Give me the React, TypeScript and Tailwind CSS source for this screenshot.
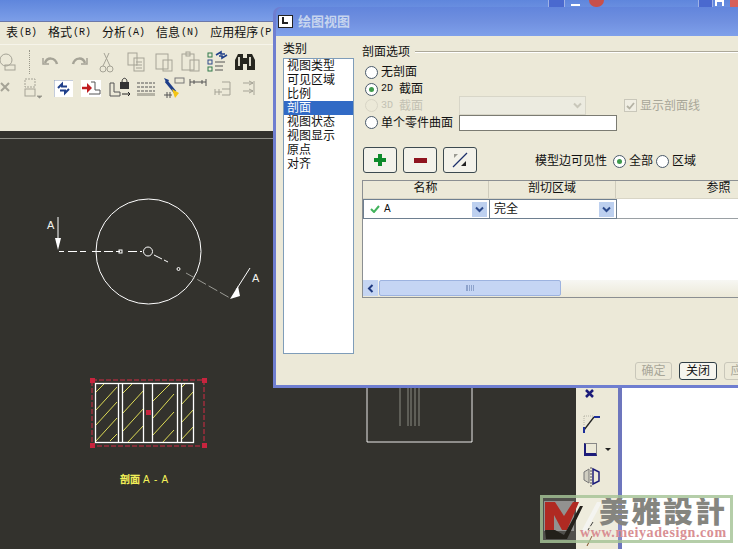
const cjk = "font-['Liberation_Sans','Noto_Sans_CJK_SC',sans-serif]";

function Radio({ on, off }: { on?: boolean; off?: boolean }) {
  return (
    <span className={`flex items-center justify-center w-[13px] h-[13px] rounded-full border shrink-0 ${off ? "border-[#d8d5c6] bg-[#ece9d8]" : "border-[#4a5a6a] bg-white"}`}>
      {on && <span className="w-[5px] h-[5px] rounded-full bg-[#3f9a4c]" />}
    </span>
  );
}

function Chevron({ dim }: { dim?: boolean }) {
  return (
    <svg width="9" height="7" viewBox="0 0 9 7" fill="none" stroke={dim ? "#c9c7ba" : "#2c4a8c"} strokeWidth="2">
      <path d="M1 1.5l3.5 3.5 3.5-3.5" />
    </svg>
  );
}

function ToolIcon({ children, w = 26 }: { children: React.ReactNode; w?: number }) {
  return (
    <svg width={w} height="24" viewBox={`0 0 ${w} 24`} fill="none" stroke="#a5a396" strokeWidth="1" className="shrink-0">
      {children}
    </svg>
  );
}

function TopToolbar() {
  return (
    <div className="flex items-center h-[30px] -ml-[6px] pt-[3px]">
      <ToolIcon><circle cx="12" cy="10" r="6" /><rect x="11" y="15" width="10" height="5" /></ToolIcon>
      <span className="w-px h-[24px] ml-[9px] mr-[8px] border-l border-dotted border-[#9a988a]" />
      <ToolIcon><path d="M7 13c2-6 10-6 12 1" strokeWidth="2.5" /><path d="M5 8v6h6" strokeWidth="1.500" /></ToolIcon>
      <span className="w-[2px]" />
      <ToolIcon><path d="M19 13c-2-6-10-6-12 1" strokeWidth="2.5" /><path d="M21 8v6h-6" strokeWidth="1.500" /></ToolIcon>
      <span className="w-[2px]" />
      <ToolIcon><circle cx="9" cy="19" r="3" /><circle cx="16" cy="19" r="3" /><path d="M9 16L15 3M16 16L10 3" /></ToolIcon>
      <span className="w-[3px]" />
      <ToolIcon><rect x="5" y="3" width="9" height="12" /><rect x="11" y="8" width="10" height="13" /><path d="M13 12h6M13 15h6M13 18h6" /></ToolIcon>
      <span className="w-[2px]" />
      <ToolIcon><rect x="5" y="4" width="12" height="15" /><rect x="12" y="10" width="9" height="11" /></ToolIcon>
      <ToolIcon><rect x="5" y="4" width="12" height="16" /><rect x="9" y="2" width="4" height="4" /><rect x="13" y="10" width="9" height="11" /></ToolIcon>
      <span className="w-[2px]" />
      <svg width="26" height="24" viewBox="0 0 26 24" fill="none" className="shrink-0">
        <rect x="3" y="3" width="4" height="4" stroke="#2f7a4a" />
        <rect x="3" y="10" width="4" height="4" stroke="#2f4a8a" />
        <rect x="3" y="17" width="4" height="4" stroke="#2f7a4a" />
        <path d="M10 12h10M10 16h8M10 20h8" stroke="#555" />
        <path d="M11 5l5-3v2h4M22 5l-5 3V6h-3" stroke="#1f3f8a" strokeWidth="1.600" />
      </svg>
      <span className="w-[2px]" />
      <svg width="24" height="24" viewBox="0 0 24 24" className="shrink-0">
        <path d="M5 4h5v16H2V10zM14 4h5l3 6v10h-8zM10 8h4v6h-4z" fill="#26261f" />
        <path d="M5 7h2v9H5M16 7h2v9h-2" fill="#d8d6c8" />
      </svg>
    </div>
  );
}

function BottomToolbar() {
  return (
    <div className="flex items-center h-[30px] -ml-[3px] -mt-[2px]">
      <ToolIcon w={20}><path d="M4 7l8 8M12 7l-8 8" strokeWidth="2" /></ToolIcon>
      <span className="w-[5px]" />
      <ToolIcon w={22}><rect x="3" y="3" width="10" height="8" strokeDasharray="2 1" /><rect x="3" y="13" width="10" height="7" /><path d="M15 20h5l-2.500 2z" fill="#777" /></ToolIcon>
      <span className="w-[10px]" />
      <svg width="19" height="17" viewBox="0 0 19 17" fill="none" className="shrink-0">
        <rect width="19" height="17" fill="#fff" />
        <path d="M0 0h19M0 0v17" stroke="#8a9ab8" />
        <path d="M4 8l4-4v2.500h5M15 9l-4 4v-2.500H6" stroke="#1f3f8a" strokeWidth="2" />
      </svg>
      <span className="w-[8px]" />
      <svg width="20" height="17" viewBox="0 0 20 17" fill="none" className="shrink-0">
        <rect width="20" height="17" fill="#fff" />
        <path d="M10 2h4v8h5v4H8" stroke="#555" />
        <path d="M1 8h7" stroke="#c01c20" strokeWidth="2.500" /><path d="M6 3l5 5-5 5z" fill="#c01c20" />
      </svg>
      <span className="w-[7px]" />
      <svg width="24" height="24" viewBox="0 0 24 24" fill="none" className="shrink-0">
        <path d="M2 7v13h10v-4H6V7z" stroke="#555" />
        <rect x="12" y="6" width="9" height="7" fill="#333" /><path d="M14 6c0-5 5-5 5 0" stroke="#333" />
        <path d="M14 18h8M20 16l2 2-2 2" stroke="#222" />
      </svg>
      <span className="w-[4px]" />
      <svg width="20" height="20" viewBox="0 0 20 20" fill="none" stroke="#555" className="shrink-0">
        <path d="M1 5h18M1 9h18M1 13h18" strokeDasharray="3 1" /><rect x="1" y="15" width="18" height="3" fill="#b5b3a5" stroke="none" />
      </svg>
      <span className="w-[6px]" />
      <svg width="26" height="24" viewBox="0 0 26 24" fill="none" className="shrink-0">
        <path d="M2 2l5 2-2 4z" fill="#1f3f8a" /><path d="M4 5l9 11" stroke="#1f3f8a" strokeWidth="3" />
        <path d="M10 13l7 4-4 5z" fill="#f4c514" /><rect x="13" y="2" width="9" height="5" stroke="#777" />
        <path d="M2 19h8M5 16v6M8 16v6" stroke="#555" />
      </svg>
      <svg width="20" height="20" viewBox="0 0 20 20" fill="none" stroke="#555" className="shrink-0 -mt-[5px]">
        <path d="M2 3v7M18 3v7M2 6h16M6 4v4M14 4v4" />
      </svg>
      <span className="w-[5px]" />
      <svg width="24" height="20" viewBox="0 0 24 20" fill="none" stroke="#a5a396" className="shrink-0">
        <path d="M2 14h7M2 11v6M6 11v6M9 4h8v13H9M9 11h8" />
      </svg>
      <span className="w-[3px]" />
      <svg width="20" height="20" viewBox="0 0 20 20" fill="none" stroke="#a5a396" className="shrink-0">
        <path d="M3 5h10M3 13h10M14 3v14M9 3l4 2-4 2M9 11l4 2-4 2" />
      </svg>
    </div>
  );
}

function Drawing() {
  return (
    <svg width="576" height="411" viewBox="0 138 576 411" fill="none" className="block shrink-0">
      <path d="M0 138h576" stroke="#e8e8e0" />
      <g stroke="#fff" strokeWidth="1">
        <circle cx="148.500" cy="251.500" r="52.500" />
        <circle cx="148" cy="251.500" r="4.500" />
        <path d="M59 251.500h5" />
        <path d="M68 251.500h18M92 251.500h28M128 251.500h14" strokeDasharray="9 3" />
        <rect x="119" y="250" width="3" height="3" />
        <path d="M154 255l8 4M164 260l4 2" />
        <circle cx="178.500" cy="269" r="1.500" />
        <path d="M186 273l44 25" strokeDasharray="10 3" stroke="#9a9a94" />
        <path d="M58 217v26" />
        <path d="M250 268l-14 22" />
      </g>
      <path d="M55 238h6l-3 12z M238 286l-8 13 10-3z" fill="#fff" />
      <text x="47" y="229" fill="#f2f2ee" fontSize="11" fontFamily="Liberation Sans, sans-serif">A</text>
      <text x="252" y="282" fill="#f2f2ee" fontSize="11" fontFamily="Liberation Sans, sans-serif">A</text>

      <path d="M92 380h112v66H92z" stroke="#d22b45" strokeDasharray="5 2" />
      <path d="M90 378h5v5h-5zM202 378h5v5h-5zM90 443h5v5h-5zM202 443h5v5h-5zM146 410h5v5h-5z" fill="#c8243e" />
      <g stroke="#f0ee5a" strokeWidth="0.900">
        <path d="M96 392l8-8M96 410l21-23M96 425l21-23M96 441l21-23M110 441l7-7" />
        <path d="M123 393l10-10M123 413l21-23M123 431l21-23M128 442l16-17" />
        <path d="M153 401l17-17M153 418l21-24M153 435l21-23M162 443l12-13" />
        <path d="M181 388l5-5M181 405l13-14M181 423l13-14M181 440l13-14" />
      </g>
      <g stroke="#fff" strokeWidth="1.300">
        <rect x="95.500" y="383.500" width="98" height="59" />
        <path d="M118.500 383v60M122.500 383v60M143.500 383v60M152.500 383v60M177.500 383v60M181.500 383v60" />
      </g>
      <text x="120" y="483" fill="#f6f45a" stroke="#f6f45a" strokeWidth="0.400" fontSize="10" fontFamily="Liberation Sans, Noto Sans CJK SC, sans-serif">剖面</text>
      <text x="143" y="483" fill="#f6f45a" fontSize="10" letterSpacing="1" fontFamily="Liberation Sans, sans-serif">A - A</text>

      <path d="M367 388v54h105v-54" stroke="#fff" strokeWidth="0.900" />
      <path d="M400 388v38M408 388v38M411 388v38M415 388v38M419 388v38" stroke="#8a8a82" />
    </svg>
  );
}

function RightToolStrip() {
  return (
    <div className="w-[42px] shrink-0 bg-[#ece9d8] flex flex-col items-start pl-[4px] pt-[250px]">
      <svg width="20" height="12" viewBox="0 0 20 12" stroke="#1c1c7a" strokeWidth="2.500" fill="none" className="mt-[1px]"><path d="M6 1l7 7M13 1L6 8" /></svg>
      <svg width="22" height="24" viewBox="0 0 22 24" fill="none" className="mt-[10px]">
        <path d="M4 19L14 6" stroke="#222" strokeWidth="1.300" /><path d="M4 16v6M14 6h6" stroke="#1c2f9a" strokeWidth="2" /><path d="M4 5v10M4 5h10" stroke="#b5b3a5" strokeDasharray="1 1" />
      </svg>
      <div className="flex items-center gap-[8px] mt-[8px]">
        <span className="w-[13px] h-[13px] ml-[4px] border border-[#888] border-l-[2px] border-b-[3px] border-l-[#1c1c7a] border-b-[#1c1c7a]" />
        <span className="w-0 h-0 border-x-[3px] border-x-transparent border-t-[3px] border-t-[#222]" />
      </div>
      <svg width="20" height="20" viewBox="0 0 20 20" fill="none" className="ml-[2px] mt-[11px]">
        <path d="M2 5l5-3v14l-5-3z" stroke="#777" fill="#cfcdc0" /><path d="M11 2l6 3v9l-6 3z" stroke="#1c1c7a" strokeWidth="1.500" /><path d="M9 0v20" stroke="#555" strokeDasharray="2 1" />
      </svg>
      <svg width="24" height="36" viewBox="0 0 24 36" fill="none" className="mt-[23px]">
        <path d="M15 0l-4 9M13 12l-5 8" stroke="#222" strokeDasharray="5 2" /><path d="M12 26l-5 10" stroke="#7a4a20" />
      </svg>
    </div>
  );
}

function Dialog() {
  const categories = ["视图类型", "可见区域", "比例", "剖面", "视图状态", "视图显示", "原点", "对齐"];
  return (
    <div className="absolute left-[273px] top-[7px] w-[490px] h-[381px] bg-[#6f7ed0] rounded-t-[7px] p-[3px] pt-0 flex flex-col">
      <div className="h-[29px] shrink-0 flex items-center gap-[5px] pl-[2px] rounded-t-[7px] bg-gradient-to-b from-[#6285dc] via-[#7090e0] to-[#7fa0ea]">
        <span className="w-[15px] h-[13px] bg-white border border-[#222] relative shrink-0">
          <span className="absolute left-[3px] top-[1px] w-[6px] h-[7px] border-l-[2px] border-b-[2px] border-[#222]" />
        </span>
        <span className="text-[13px] font-bold text-[#c6d4ee]">绘图视图</span>
      </div>

      <div className="flex-1 bg-[#ece9d8] flex text-[12px] leading-[14px] text-[#111] pl-[7px] min-h-0 relative">
        <div className="w-[79px] shrink-0 flex flex-col pt-[5px]">
          <span className="h-[17px] pt-[1px]">类别</span>
          <ul className="w-[71px] h-[296px] bg-white border border-[#7f9db9]">
            {categories.map((c) => (
              <li key={c} className={`h-[14px] pl-[3px] ${c === "剖面" ? "bg-[#316ac5] text-white" : ""}`}>{c}</li>
            ))}
          </ul>
        </div>

        <div className="flex-1 flex flex-col pt-[9px] min-w-0">
          <div className="flex items-center gap-[5px]">
            <span>剖面选项</span>
            <span className="flex-1 border-t border-b border-t-[#aca899] border-b-white h-[2px]" />
          </div>
          <div className="flex flex-col pl-[3px] pt-[5px] h-[72px]">
            <label className="flex items-center gap-[3px] h-[17px]"><Radio /><span>无剖面</span></label>
            <label className="flex items-center gap-[3px] h-[17px]"><Radio on /><span className="font-['Liberation_Mono','Noto_Sans_CJK_SC',monospace] text-[10px]">2D</span><span className="ml-[3px]">截面</span></label>
            <div className="flex items-center h-[17px]">
              <label className="flex items-center gap-[3px] text-[#c3c1b3] w-[94px]"><Radio off /><span className="font-['Liberation_Mono',monospace] text-[10px]">3D</span><span className="ml-[3px]">截面</span></label>
              <span className="w-[127px] h-[19px] bg-[#ecebe0] border border-[#d8d6c8] flex items-center justify-end pr-[3px]"><Chevron dim /></span>
              <span className="flex items-center gap-[3px] ml-[38px] text-[#a8a698]">
                <span className="w-[13px] h-[13px] border border-[#c9c7ba] bg-[#f0eee3] flex items-center justify-center">
                  <svg width="9" height="8" viewBox="0 0 9 8" fill="none" stroke="#b4b2a4" strokeWidth="1.800"><path d="M1 4l2.500 2.500L8 1" /></svg>
                </span>
                显示剖面线
              </span>
            </div>
            <div className="flex items-center h-[17px]">
              <label className="flex items-center gap-[3px] w-[94px] whitespace-nowrap"><Radio /><span>单个零件曲面</span></label>
              <span className="w-[158px] h-[16px] bg-white border border-[#7b7b72]" />
            </div>
          </div>

          <div className="flex items-center mt-[16px] h-[26px] pl-[1px]">
            <button className="w-[34px] h-[26px] border border-[#3c4a50] rounded-[3px] bg-[#f3f2ea] flex items-center justify-center">
              <svg width="12" height="12" viewBox="0 0 12 12" fill="#0d8a2a"><path d="M4 0h4v4h4v4H8v4H4V8H0V4h4z" /></svg>
            </button>
            <button className="w-[34px] h-[26px] ml-[6px] border border-[#3c4a50] rounded-[3px] bg-[#f3f2ea] flex items-center justify-center">
              <span className="w-[13px] h-[5px] bg-[#8f1420]" />
            </button>
            <button className="w-[34px] h-[26px] ml-[6px] border border-[#3c4a50] rounded-[3px] bg-[#f3f2ea] flex items-center justify-center">
              <svg width="18" height="18" viewBox="0 0 18 18" fill="none">
                <path d="M2 16L16 2" stroke="#1c2f6a" strokeWidth="1.300" />
                <path d="M3 3h4L3 7z" fill="#9a9a92" /><path d="M15 15h-5l5-5z" fill="#222" />
              </svg>
            </button>
            <div className="flex items-center ml-[58px] mt-[2px]">
              <span>模型边可见性</span>
              <span className="ml-[6px]"><Radio on /></span>
              <span className="ml-[3px]">全部</span>
              <span className="ml-[3px]"><Radio /></span>
              <span className="ml-[3px]">区域</span>
            </div>
          </div>

          <div className="mt-[7px] h-[118px] w-[400px] border border-[#8b8f92] border-r-0 bg-white flex flex-col overflow-hidden">
            <div className="h-[18px] shrink-0 flex bg-[#ece9d8] border-b border-[#d8d5c6] text-center">
              <span className="w-[126px] shrink-0 border-r border-[#cfccbc]">名称</span>
              <span className="w-[127px] shrink-0 border-r border-[#cfccbc]">剖切区域</span>
              <span className="w-[205px] shrink-0">参照</span>
            </div>
            <div className="h-[20px] shrink-0 flex">
              <span className="w-[127px] shrink-0 border border-[#6e7f90] flex items-center pl-[6px] gap-[4px] pr-[2px]">
                <svg width="10" height="8" viewBox="0 0 10 8" fill="none" stroke="#42b35c" strokeWidth="2"><path d="M1 4l3 3 5-6" /></svg>
                <span className="flex-1 text-[10px]">A</span>
                <span className="w-[15px] h-[15px] bg-[#bdd0ef] flex items-center justify-center"><Chevron /></span>
              </span>
              <span className="w-[127px] shrink-0 border border-l-0 border-[#6e7f90] flex items-center pl-[4px] pr-[2px]">
                <span className="flex-1">完全</span>
                <span className="w-[15px] h-[15px] bg-[#bdd0ef] flex items-center justify-center"><Chevron /></span>
              </span>
              <span className="flex-1 border-b border-[#9aa0a4]" />
            </div>
            <div className="flex-1" />
            <div className="h-[17px] shrink-0 flex bg-gradient-to-b from-[#f7f7f3] to-[#ece9d8]">
              <span className="w-[15px] h-[16px] bg-[#c5d5f2] flex items-center justify-center">
                <svg width="7" height="9" viewBox="0 0 7 9" fill="none" stroke="#1f3a80" strokeWidth="2"><path d="M5.500 1L2 4.500 5.500 8" /></svg>
              </span>
              <span className="w-[182px] h-[16px] ml-[1px] rounded-[2px] border border-[#9db3e0] bg-[#c5d5f4] flex items-center justify-center">
                <span className="w-[8px] h-[6px] border-x border-[#8ea3cc] bg-[repeating-linear-gradient(90deg,#8ea3cc_0,#8ea3cc_1px,transparent_1px,transparent_2px)]" />
              </span>
            </div>
          </div>
        </div>

        <div className="absolute left-[359px] top-[326px] flex gap-[7px]">
          <span className="w-[37px] h-[18px] border border-[#c9c7ba] rounded-[3px] text-[#a8a698] flex items-center justify-center">确定</span>
          <span className="w-[38px] h-[18px] border border-[#2f3e46] rounded-[3px] bg-[#f6f5ee] flex items-center justify-center">关闭</span>
          <span className="w-[37px] h-[18px] border border-[#c9c7ba] rounded-[3px] text-[#a8a698] flex items-center justify-center">应用</span>
        </div>
      </div>
    </div>
  );
}

function Watermark() {
  return (
    <div className="absolute left-[540px] top-[495px] w-[193px] h-[48px] border-[3px] border-[#a3c293]/80 bg-white/15 flex items-center overflow-hidden">
      <svg width="68" height="42" viewBox="0 0 68 42" className="shrink-0">
        <rect x="1" y="3" width="30" height="30" fill="#929290" />
        <path d="M2 4h10l9 14L30 4h6L24 32h-5L11 17v15H2z" fill="#b02a22" />
        <path d="M2 32h10l9 5L37 8h3L24 41H3z" fill="#23201a" />
        <path d="M38 34L54 4h5L43 34z" fill="#f4f4f0" />
      </svg>
      <div className="flex flex-col min-w-0 -ml-[31px]">
        <span className="text-[30px] leading-[27px] font-black text-[#85857f] tracking-[2px] pl-[19px] whitespace-nowrap">美雅設計</span>
        <span className="font-['Liberation_Serif',serif] text-[14px] leading-[15px] font-bold text-[#d98f94] tracking-[0.600px] whitespace-nowrap">www.meiyadesign.com</span>
      </div>
    </div>
  );
}

function WindowButtons() {
  return (
    <div className="absolute right-0 top-0 h-[7px] w-[198px] flex items-start overflow-hidden">
      <span className="ml-[8px] w-[20px] h-[7px] bg-[#4a69cf] border-x border-[#9fb2e6]" />
      <span className="ml-[6px] w-[12px] h-[2px] mt-[4px] bg-white" />
      <span className="ml-[9px] w-[18px] h-[7px] bg-[#c8504a] rounded-b-[8px]" />
      <span className="ml-[94px] w-[18px] h-[7px] bg-[#4a69cf] border-x border-[#9fb2e6]" />
      <span className="ml-[2px] w-[10px] h-[6px] border-2 border-b-0 border-white" />
      <span className="ml-[6px] w-[10px] h-[7px] bg-[#d8605a]" />
    </div>
  );
}

export default function App() {
  const menus = [
    ["表", "(B)"],
    ["格式", "(R)"],
    ["分析", "(A)"],
    ["信息", "(N)"],
    ["应用程序", "(P"],
  ];
  return (
    <div className={`relative w-[738px] h-[549px] overflow-hidden bg-[#33322d] ${cjk}`}>
      <div className="h-[22px] bg-gradient-to-b from-[#5f86dc] to-[#7c9ee8] border-b border-[#6b78a8]" />
      <div className="h-[23px] bg-[#ece9d8] flex items-center gap-[11px] pl-[6px] pb-[1px] text-[12px] text-[#111] whitespace-nowrap border-b border-[#f6f4ea]">
        {menus.map(([label, key]) => (
          <span key={label} className="flex items-center gap-[1px]">
            {label}
            <span className="font-['Liberation_Mono',monospace] text-[10px]">{key}</span>
          </span>
        ))}
      </div>
      <div className="h-[86px] bg-[#ece9d8] flex flex-col overflow-hidden">
        <TopToolbar />
        <BottomToolbar />
      </div>
      <div className="h-[7px]" />
      <div className="flex h-[411px]">
        <Drawing />
        <RightToolStrip />
        <div className="flex-1 bg-white border-l-[4px] border-[#6d76bd]" />
      </div>
      <WindowButtons />
      <Dialog />
      <Watermark />
    </div>
  );
}
